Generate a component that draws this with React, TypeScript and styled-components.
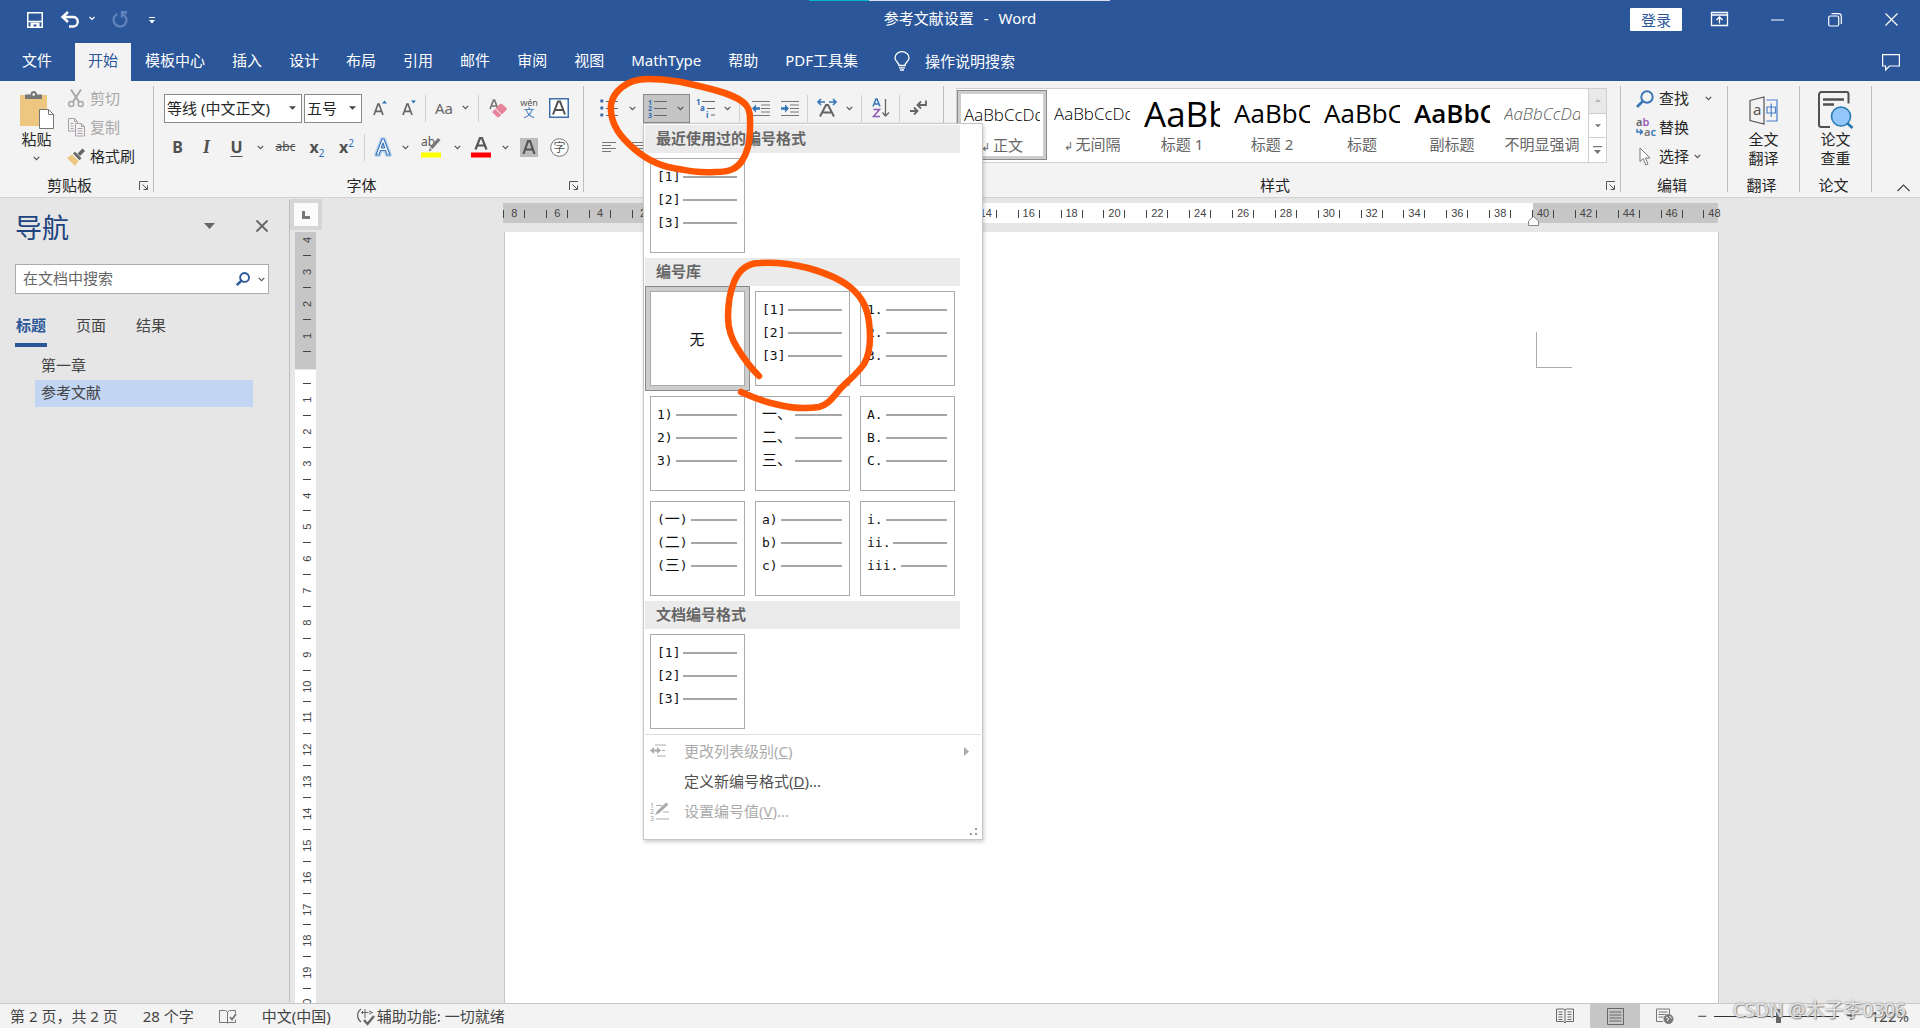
import React from 'react';
import styled, { createGlobalStyle, css } from 'styled-components';

const BLUE = '#2b579a';
const INK = '#444444';
const LINE = '#c6c6c6';

const Global = createGlobalStyle`
  * { box-sizing: border-box; }
  body {
    margin: 0;
    overflow: hidden;
    color: #262626;
    font: 15px/20px "Noto Sans", "Noto Sans CJK SC", sans-serif;
  }
  button, input, select { font: inherit; color: inherit; }
  button { border: 0; padding: 0; background: none; }
  svg { display: block; flex: none; overflow: visible; }
`;

const Window = styled.div`
  position: relative;
  display: flex;
  flex-direction: column;
  height: 100vh;
  background: #e6e6e6;
`;

/* ---------- title bar ---------- */

const TitleBar = styled.header`
  display: grid;
  grid-template-columns: 1fr auto 1fr;
  height: 43px;
  background: ${BLUE};
  color: #fff;
`;

const LoadStrip = styled.div`
  position: absolute;
  top: 0;
  left: 809px;
  width: 301px;
  height: 1px;
  background: linear-gradient(to right, #00b7c3 60px, #d9e0ea 60px);
`;

const QuickAccess = styled.div`
  display: flex;
  align-items: center;
  gap: 16px;
  height: 40px;
  padding-left: 27px;
`;

const DocTitle = styled.h1`
  display: flex;
  gap: 10px;
  margin: 0;
  font-size: 15px;
  font-weight: 400;
  line-height: 36px;
`;

const WindowControls = styled.div`
  display: flex;
  justify-content: flex-end;
  align-items: center;
  height: 39px;
`;

const LoginButton = styled.button`
  width: 52px;
  height: 23px;
  margin-right: 7px;
  border-radius: 1px;
  background: #fff;
  color: ${BLUE};
  line-height: 22px;
`;

const WindowButton = styled.button`
  display: grid;
  place-items: center;
  width: 57px;
  height: 36px;
`;

/* ---------- tab strip ---------- */

const TabStrip = styled.nav`
  display: flex;
  gap: 1px;
  height: 38px;
  padding-left: 9px;
  background: ${BLUE};
  color: #fff;
`;

const Tab = styled.button<{ $active?: boolean; $first?: boolean }>`
  padding: 0 13px 4px;
  margin-right: ${p => (p.$first ? '9px' : '0')};
  line-height: 32px;
  ${p => p.$active && css`background: #f3f3f3; color: ${BLUE};`}
`;

const TellMe = styled.button`
  display: flex;
  align-items: center;
  gap: 15px;
  margin-left: 22px;
  padding-bottom: 2px;
`;

const CommentButton = styled.button`
  margin-left: auto;
  margin-right: 20px;
`;

/* ---------- ribbon ---------- */

const Ribbon = styled.section`
  display: flex;
  height: 117px;
  padding: 5px 0;
  background: #f3f3f3;
  border-bottom: 1px solid #d2d2d2;
`;

const Group = styled.div<{ $w?: number }>`
  display: flex;
  flex-direction: column;
  ${p => (p.$w ? `flex: none; width: ${p.$w}px;` : 'flex: 1; min-width: 0;')}
  border-right: 1px solid #bdbdbd;
`;

const GroupBody = styled.div`
  flex: 1;
  min-height: 0;
`;

const GroupFooter = styled.div`
  display: flex;
  align-items: center;
  height: 12px;
  padding-right: 4px;
  line-height: 12px;
`;

const GroupLabel = styled.span`
  flex: 1;
  padding-bottom: 2px;
  text-align: center;
`;

const Launcher = styled.button`
  flex: none;
`;

const ClipboardBody = styled(GroupBody)`
  display: flex;
`;

const BigButton = styled.button`
  display: flex;
  flex-direction: column;
  align-items: center;
  justify-content: flex-start;
  padding-top: 4px;
  line-height: 19px;
`;

const PasteButton = styled(BigButton)`
  width: 62px;
  padding-left: 11px;
`;

const BigIcon = styled.span`
  display: grid;
  place-items: center;
  height: 40px;
`;

const ChevronSlot = styled.span`
  display: grid;
  place-items: center;
  height: 18px;
`;

const LineList = styled.div<{ $pad: number }>`
  display: flex;
  flex-direction: column;
  gap: 2px;
  padding-left: ${p => p.$pad}px;
`;

const LineButton = styled.button<{ $off?: boolean }>`
  display: flex;
  align-items: center;
  gap: 5px;
  height: 27px;
  padding-bottom: 2px;
  line-height: 25px;
  color: ${p => (p.$off ? '#a8a8a8' : '#262626')};
`;

const LineIcon = styled.span`
  display: grid;
  place-items: center;
  width: 18px;
  height: 20px;
`;

const ToolRows = styled(GroupBody)`
  display: flex;
  flex-direction: column;
  gap: 10px;
  padding: 8px 0 0 10px;
`;

const ToolRow = styled.div`
  display: flex;
  align-items: center;
  height: 29px;
`;

const Tool = styled.button<{ $w?: number }>`
  display: grid;
  place-items: center;
  flex: none;
  width: ${p => p.$w ?? 29}px;
  height: 28px;
  padding-bottom: 1px;
  color: ${INK};
`;

const AaTool = styled.button`
  display: flex;
  align-items: center;
  gap: 9px;
  width: 46px;
  height: 28px;
  padding: 0 0 2px 6px;
  color: #666;
`;

const Divider = styled.span<{ $gap?: number }>`
  flex: none;
  width: 1px;
  height: 27px;
  margin: 0 ${p => p.$gap ?? 3}px;
  background: #d0d0d0;
`;

const Combo = styled.label<{ $w: number }>`
  display: flex;
  align-items: center;
  width: ${p => p.$w}px;
  height: 29px;
  padding: 0 5px 2px 0;
  margin-right: 2px;
  border: 1px solid #8a8a8a;
  background: #fff;
  color: ${INK};
  select {
    flex: 1;
    min-width: 0;
    padding: 0 0 0 2px;
    border: 0;
    outline: 0;
    appearance: none;
    background: none;
    color: #262626;
  }
`;

const Glyph = styled.span<{ $size?: number; $bold?: boolean; $italic?: boolean; $line?: string; $serif?: boolean }>`
  font-size: ${p => p.$size ?? 18}px;
  font-weight: ${p => (p.$bold ? 700 : 400)};
  font-style: ${p => (p.$italic ? 'italic' : 'normal')};
  text-decoration: ${p => p.$line ?? 'none'};
  text-underline-offset: 3px;
  line-height: 20px;
  color: #505050;
  ${p => p.$serif && 'font-family: "Liberation Serif", serif;'}
  sub, sup { font-size: 10px; line-height: 0; font-weight: 400; color: #2f6eb5; }
`;

const MenuAnchor = styled.div`
  position: relative;
  margin-left: 2px;
`;

const NumberingButton = styled.button`
  display: flex;
  align-items: center;
  gap: 10px;
  width: 47px;
  height: 29px;
  padding-left: 4px;
  border: 1px solid #8a8a8a;
  background: #c5c5c5;
`;

/* ---------- styles gallery ---------- */

const GalleryBody = styled(GroupBody)`
  padding: 2px 13px 0 12px;
`;

const Gallery = styled.div`
  display: flex;
  height: 75px;
  border: 1px solid #cfcfcf;
  background: #fff;
`;

const StyleCards = styled.div`
  display: flex;
  flex: 1;
  min-width: 0;
  overflow: hidden;
  padding-top: 1px;
`;

const StyleCard = styled.button<{ $on?: boolean }>`
  flex: none;
  display: flex;
  flex-direction: column;
  width: 90px;
  height: 70px;
  padding: 0 7px;
  ${p => p.$on && css`
    padding: 0 6px;
    border: 1px solid #8a8a8a;
    box-shadow: inset 0 0 0 3px #cdcdcd;
  `}
`;

const StyleSample = styled.span<{ $size: number; $weight?: number; $italic?: boolean }>`
  align-self: stretch;
  height: 46px;
  overflow: hidden;
  text-align: left;
  white-space: nowrap;
  font-family: "Open Sans", "Noto Sans", sans-serif;
  font-size: ${p => p.$size}px;
  font-weight: ${p => p.$weight ?? 400};
  font-style: ${p => (p.$italic ? 'italic' : 'normal')};
  line-height: 47px;
  color: ${p => (p.$italic ? '#5a5a5a' : '#000')};
`;

const StyleName = styled.span`
  align-self: stretch;
  line-height: 16px;
  text-align: center;
  white-space: nowrap;
  color: #666;
  small { font-size: 11px; }
`;

const GalleryScroll = styled.div`
  display: flex;
  flex-direction: column;
  width: 18px;
  border-left: 1px solid #cfcfcf;
  button {
    flex: 1;
    display: grid;
    place-items: center;
    color: #777;
  }
  button + button { border-top: 1px solid #cfcfcf; }
  button:first-child { background: #e9e9e9; color: #b5b5b5; }
`;

const CollapseButton = styled.button`
  align-self: flex-end;
  flex: none;
  margin: 0 10px 0 25px;
`;

/* ---------- numbering menu ---------- */

const Menu = styled.div`
  position: absolute;
  z-index: 5;
  top: 100%;
  left: 0;
  width: 340px;
  padding: 1px 1px 13px;
  border: 1px solid ${LINE};
  background: #fff;
  box-shadow: 1px 2px 4px rgba(0, 0, 0, 0.2);
`;

const MenuHeading = styled.h2`
  width: 315px;
  height: 28px;
  margin: 0;
  padding-left: 11px;
  background: #ebebeb;
  color: #666;
  font-size: 15px;
  font-weight: 700;
  line-height: 26px;
`;

const TileGrid = styled.div`
  display: grid;
  grid-template-columns: repeat(3, 105px);
`;

const TileSlot = styled.button<{ $on?: boolean }>`
  height: 105px;
  padding: ${p => (p.$on ? 4 : 5)}px;
  ${p => p.$on && 'border: 1px solid #8a8a8a; background: #cdcdcd;'}
`;

const Tile = styled.span`
  display: flex;
  flex-direction: column;
  height: 95px;
  padding: 6px 7px 0 6px;
  border: 1px solid #ababab;
  background: #fff;
  color: #111;
`;

const NoneLabel = styled.span`
  margin: auto;
  padding-bottom: 6px;
`;

const TileRow = styled.span`
  display: flex;
  align-items: center;
  gap: 3px;
  height: 23px;
  font: 13px/23px "DejaVu Sans Mono", "Noto Sans CJK SC", monospace;
  &::after {
    content: '';
    flex: 1;
    height: 2px;
    background: #a6a6a6;
  }
`;

const Han = styled.span`
  font-size: 15px;
`;

const MenuItems = styled.div`
  border-top: 1px solid #dfdfe3;
  padding-top: 1px;
`;

const MenuItem = styled.button<{ $off?: boolean }>`
  display: flex;
  align-items: center;
  width: 100%;
  height: 30px;
  padding: 0 12px 0 5px;
  color: ${p => (p.$off ? '#ababab' : '#505050')};
  text-align: left;
`;

const MenuIcon = styled.span`
  width: 34px;
`;

const MenuText = styled.span`
  flex: 1;
`;

const Grip = styled.span`
  position: absolute;
  right: 4px;
  bottom: 3px;
`;

/* ---------- navigation pane ---------- */

const Workspace = styled.main`
  display: flex;
  flex: 1;
  min-height: 0;
`;

const NavPane = styled.aside`
  flex: none;
  width: 290px;
  margin: 2px 0 1px;
  padding: 9px 20px 0 15px;
  border-right: 1px solid #bdbdbd;
`;

const NavHeader = styled.div`
  display: flex;
  align-items: center;
  height: 34px;
  gap: 40px;
`;

const NavTitle = styled.h2`
  flex: 1;
  margin: 0;
  padding-top: 4px;
  color: #1e4480;
  font-size: 27px;
  font-weight: 400;
  line-height: 34px;
`;

const SearchBox = styled.label`
  display: flex;
  align-items: center;
  gap: 8px;
  height: 30px;
  margin-top: 21px;
  padding: 0 3px 0 7px;
  border: 1px solid #ababab;
  background: #fff;
  input {
    flex: 1;
    min-width: 0;
    padding: 0 0 3px;
    border: 0;
    outline: 0;
    background: none;
  }
  input::placeholder { color: #666; opacity: 1; }
`;

const NavTabs = styled.div`
  display: flex;
  margin-top: 18px;
`;

const NavTab = styled.button<{ $on?: boolean }>`
  width: 32px;
  height: 35px;
  margin-right: 28px;
  padding-bottom: 5px;
  color: ${p => (p.$on ? BLUE : INK)};
  font-weight: ${p => (p.$on ? 700 : 400)};
  white-space: nowrap;
  border-bottom: 4px solid ${p => (p.$on ? BLUE : 'transparent')};
`;

const Outline = styled.ul`
  margin: 6px 16px 0 20px;
  padding: 0;
  list-style: none;
`;

const OutlineItem = styled.li<{ $on?: boolean }>`
  height: 27px;
  padding-left: 6px;
  color: ${INK};
  line-height: 25px;
  background: ${p => (p.$on ? '#c2d5f2' : 'transparent')};
`;

/* ---------- editor ---------- */

const Editor = styled.section`
  flex: 1;
  min-width: 0;
  display: grid;
  grid-template: 34px minmax(0, 1fr) / 33px minmax(0, 1fr);
`;

const TabStop = styled.button`
  display: grid;
  place-items: center;
  width: 32px;
  height: 31px;
  margin-top: 1px;
  border: 4px solid #d6d6d6;
  background: #fbfbfb;
`;

const RulerTrack = styled.div`
  padding: 5px 202px 0 180px;
`;

const Ruler = styled.div`
  position: relative;
  height: 20px;
  background: linear-gradient(to right, ${LINE} 183px, #fff 183px calc(100% - 185px), ${LINE} calc(100% - 185px));
`;

const RulerClip = styled.div`
  display: flex;
  margin-left: -10px;
  margin-right: -18px;
  clip-path: inset(0 14px 0 10px);
`;

const RulerCell = styled.span`
  flex: 1;
  display: flex;
  align-items: center;
  justify-content: center;
  height: 20px;
  font: 11px/24px "Liberation Sans", sans-serif;
  color: ${INK};
  span { width: 20px; text-align: center; }
  &::before, &::after {
    content: '';
    width: 1px;
    height: 8px;
    margin-top: 2px;
    background: ${INK};
  }
`;

const IndentMark = styled.span`
  position: absolute;
  right: 179px;
  top: 13px;
`;

const VRuler = styled.div`
  display: flex;
  flex-direction: column;
  width: 21px;
  margin-left: 5px;
  overflow: hidden;
`;

const VMargin = styled.div`
  flex: none;
  display: flex;
  flex-direction: column;
  justify-content: flex-end;
  height: 137px;
  padding-bottom: 17px;
  overflow: hidden;
  background: ${LINE};
`;

const VBody = styled.div`
  flex: 1;
  display: flex;
  flex-direction: column;
  margin: 1px 0 -17px;
  padding-top: 13px;
  background: #fff;
`;

const VCell = styled.span<{ $tickLast?: boolean }>`
  flex: ${p => (p.$tickLast ? 'none' : 1)};
  display: flex;
  flex-direction: ${p => (p.$tickLast ? 'column-reverse' : 'column')};
  align-items: center;
  height: 32px;
  min-height: 0;
  padding-left: 3px;
  &::before {
    content: '';
    flex: none;
    width: 8px;
    height: 1px;
    background: ${INK};
  }
  span {
    flex: 1;
    writing-mode: vertical-rl;
    transform: rotate(180deg);
    text-align: center;
    font: 11px/12px "Liberation Sans", sans-serif;
    color: ${INK};
  }
`;

const Canvas = styled.div`
  display: flex;
  padding: 0 201px 0 181px;
`;

const Page = styled.article`
  flex: 1;
  border: solid ${LINE};
  border-width: 0 1px;
  background: #fff;
`;

const MarginCorner = styled.span`
  display: block;
  width: 36px;
  height: 36px;
  margin: 100px 146px 0 auto;
  border: solid #ababab;
  border-width: 0 0 1px 1px;
`;

/* ---------- status bar ---------- */

const StatusBar = styled.footer`
  position: relative;
  display: flex;
  align-items: center;
  height: 25px;
  padding: 0 11px 0 10px;
  border-top: 1px solid ${LINE};
  background: #f3f3f3;
  color: ${INK};
  line-height: 24px;
  white-space: pre;
`;

const StatusItems = styled.div`
  display: flex;
  align-items: center;
  gap: 25px;
  flex: 1;
`;

const StatusNote = styled.span`
  display: flex;
  align-items: center;
  gap: 2px;
`;

const ViewButton = styled.button<{ $on?: boolean }>`
  display: grid;
  place-items: center;
  width: 50px;
  height: 24px;
  background: ${p => (p.$on ? LINE : 'transparent')};
`;

const ZoomButton = styled.button`
  width: 24px;
  font-size: 17px;
  line-height: 22px;
`;

const ZoomSlider = styled.input`
  appearance: none;
  width: 125px;
  height: 16px;
  margin: 0;
  background: linear-gradient(#333, #333) center / 100% 1px no-repeat;
  &::-webkit-slider-thumb {
    appearance: none;
    width: 5px;
    height: 14px;
    background: #666;
  }
`;

const ZoomValue = styled.span`
  width: 46px;
  text-align: right;
`;

const Watermark = styled.span`
  position: absolute;
  right: 14px;
  bottom: 6px;
  font-size: 19px;
  line-height: 24px;
  color: rgba(255, 255, 255, 0.75);
  text-shadow: 0 0 2px #777, 1px 1px 1px #999;
`;

const Annotations = styled.svg`
  position: absolute;
  z-index: 9;
  top: 0;
  left: 0;
  pointer-events: none;
`;

/* ---------- small drawings ---------- */

const Chevron = ({ color = '#555' }: { color?: string }) => (
  <svg width="7" height="5" viewBox="0 0 7 5" fill="none" stroke={color} strokeWidth="1.2"><path d="M0.7 0.8 3.5 3.6 6.3 0.8" /></svg>
);

const Down = ({ w = 7 }: { w?: number }) => (
  <svg width={w} height={w / 2 + 0.5} viewBox="0 0 8 4" fill="currentColor"><path d="M0 0h8L4 4z" /></svg>
);

const LaunchIcon = () => (
  <svg width="10" height="10" viewBox="0 0 10 10" fill="none" stroke="#555"><path d="M0.5 9V0.5H9M3.5 3.5 8 8M4.5 8.5h4v-4" /></svg>
);

const Drop = ({ w, label }: { w: number; label: string }) => (
  <Tool $w={w} aria-label={label}><Chevron /></Tool>
);

const SearchIcon = ({ size, width = 2, color }: { size: number; width?: number; color: string }) => (
  <svg width={size} height={size} viewBox="0 0 18 18" fill="none" stroke={color} strokeWidth={width}><circle cx="11" cy="7" r="5.7" /><path d="M6.7 11.3 1 17" strokeWidth={width + 0.8} /></svg>
);

const SaveIcon = () => (
  <svg width="16" height="16" viewBox="0 0 16 16" fill="none"><path d="M0.750.750h14.500v14.500H0.750z" stroke="#fff" strokeWidth="1.500" /><path d="M1 9.500h14" stroke="#fff" strokeWidth="1.500" /><path d="M3.500 15.500V10.500h9v5H9.500v-3H6.500v3z" fill="#fff" /></svg>
);

const PasteIcon = () => (
  <svg width="34" height="38" viewBox="0 0 34 38">
    <path d="M0 4h27v31H0z" fill="#edc77f" />
    <path d="M5 8V3.5h5.5C10.500 1 12 0 13.700 0s3.300 1 3.300 3.500H22V8z" fill="#777" /><circle cx="13.700" cy="3.500" r="1.300" fill="#fff" />
    <path d="M19.500 18.500h9l5 5v14h-14z" fill="#fff" stroke="#777" /><path d="M28.500 18.500v5h5" fill="none" stroke="#777" />
  </svg>
);

const CutIcon = () => (
  <svg width="16" height="19" viewBox="0 0 16 19" fill="none" stroke="#a8a8a8" strokeWidth="1.500"><circle cx="3.300" cy="15" r="2.500" /><circle cx="12.700" cy="15" r="2.500" /><path d="M3 0.500 11 12.700M13 0.500 5 12.700" strokeWidth="2" /></svg>
);

const CopyIcon = () => (
  <svg width="17" height="19" viewBox="0 0 17 19" fill="#f3f3f3" stroke="#a8a0a8"><path d="M0.500 0.500h6l3 3v9.500h-9zM6.500 0.500v3h3M2.500 5.500h3M2.500 8h3M2.500 10.500h3" /><path d="M7.500 5.500h6l3 3v9.500h-9zM13.500 5.500v3h3M9.500 10.500h5M9.500 13h5M9.500 15.500h5" /></svg>
);

const BrushIcon = () => (
  <svg width="18" height="18" viewBox="0 0 18 18"><path d="M0 10 5 6.500 11.500 13 8 18z" fill="#edc77f" /><path d="M6 5.500 8 3.800l6.500 6.500-2 2z" fill="#666" /><path d="m10.500 5.500 5-5L18 3l-5 5z" fill="#666" /></svg>
);

const LetterIcon = ({ up }: { up: boolean }) => (
  <svg width="14" height="18" viewBox="0 0 14 18" fill="none">
    <path d="M1 16 5 5h1l4 11M2.500 12.300h6" stroke="#666" strokeWidth="1.700" />
    <path d={up ? 'M9 4.500h5L11.500 1.500z' : 'M9 1.500h5l-2.500 3z'} fill="#2f6eb5" />
  </svg>
);

const EraserIcon = () => (
  <svg width="18" height="20" viewBox="0 0 18 20" fill="none">
    <path d="M1 11 4.500 2h1L9 11M2.500 8h5" stroke="#777" strokeWidth="1.700" />
    <path d="m3 14 8-8a2 2 0 0 1 2 0l4.500 4a2 2 0 0 1 0 2L10 19a2 2 0 0 1-2 0z" fill="#e8849a" /><path d="m6 10.500 6.500 6" stroke="#fff" />
  </svg>
);

const PinyinIcon = () => (
  <svg width="18" height="22" viewBox="0 0 18 22">
    <text x="9" y="9" fontSize="9" textAnchor="middle" fill="#555" fontFamily="Noto Sans, sans-serif">wén</text>
    <text x="9" y="20" fontSize="11" textAnchor="middle" fill="#2f6eb5" fontFamily="Noto Sans CJK SC, sans-serif">文</text>
  </svg>
);

const BoxedA = () => (
  <svg width="20" height="20" viewBox="0 0 20 20"><path d="M0.750.750h18.500v18.500h-18.500z" fill="#fff" stroke="#3d6fad" strokeWidth="1.500" /><path d="M4 16.500 9 3.500h2l5 13M6 12h8" fill="none" stroke="#505050" strokeWidth="2" /></svg>
);

const GlowA = () => (
  <svg width="20" height="22" viewBox="0 0 20 22" fill="none" strokeLinejoin="round"><path d="M3 19 9 3h2l6 16h-3l-1.500-4.500h-5L6 19zM8.300 12h3.400L10 7z" stroke="#bcd6f2" strokeWidth="4" /><path d="M3 19 9 3h2l6 16h-3l-1.500-4.500h-5L6 19zM8.300 12h3.400L10 7z" fill="#fff" stroke="#3d78bd" strokeWidth="1.200" /></svg>
);

const HighlightIcon = () => (
  <svg width="20" height="22" viewBox="0 0 20 22">
    <text x="0" y="10" fontSize="12" fill="#555" fontFamily="Noto Sans, sans-serif">ab</text>
    <path d="m9 11 8-9 2.500 2-8 9zM8.500 12l2.500 2-3 1.500z" fill="#777" /><path d="M0 16.500h20v5H0z" fill="#ff0" />
  </svg>
);

const FontColorIcon = () => (
  <svg width="20" height="22" viewBox="0 0 20 22"><path d="M4.500 13.500 9 2h2l4.500 11.500M6.500 9.500h7" fill="none" stroke="#555" strokeWidth="2.200" /><path d="M0 16.500h20v5H0z" fill="#f00" /></svg>
);

const ShadedA = () => (
  <svg width="18" height="19" viewBox="0 0 18 19"><path d="M0 0h18v19H0z" fill="#bcbcbc" /><path d="M3.500 16 8 3h2l4.500 13M5.500 11.500h7" fill="none" stroke="#555" strokeWidth="2.200" /></svg>
);

const CircledChar = () => (
  <svg width="19" height="19" viewBox="0 0 19 19"><circle cx="9.500" cy="9.500" r="8.800" fill="#fff" stroke="#777" /><text x="9.500" y="14" fontSize="12" textAnchor="middle" fill="#555" fontFamily="Noto Sans CJK SC, sans-serif">字</text></svg>
);

const BulletsIcon = () => (
  <svg width="18" height="18" viewBox="0 0 18 18"><g fill="#3d6fad"><circle cx="1.800" cy="2" r="1.700" /><circle cx="1.800" cy="9" r="1.700" /><circle cx="1.800" cy="16" r="1.700" /></g><path d="M6 2.500h12M6 9.500h12M6 16.500h12" stroke="#666" /></svg>
);

const NumbersIcon = () => (
  <svg width="19" height="19" viewBox="0 0 19 19"><g fill="#2f6eb5" fontSize="7" fontWeight="700" fontFamily="Noto Sans, sans-serif"><text x="0" y="5.500">1</text><text x="0" y="12">2</text><text x="0" y="19">3</text></g><path d="M6 2.500h13M6 9.500h13M6 16.500h13" stroke="#666" /></svg>
);

const MultiIcon = () => (
  <svg width="19" height="19" viewBox="0 0 19 19"><g fill="#2f6eb5" fontSize="8" fontWeight="700" fontFamily="Noto Sans, sans-serif"><text x="0" y="6">1</text><text x="4" y="12">a</text><text x="10" y="18.500">i</text></g><path d="M6 2.500h13M11 9.500h8M15 16h4" stroke="#666" /></svg>
);

const IndentIcon = ({ right }: { right?: boolean }) => (
  <svg width="18" height="17" viewBox="0 0 18 17"><path d="M0 1.500h18M9 5h9M9 8.500h9M9 12h9M0 15.500h18" stroke="#777" /><path d={right ? 'M0 7.200h4V4.500l4 4-4 4V9.700H0z' : 'M8 7.200H4V4.500l-4 4 4 4V9.700h4z'} fill="#3475b5" /></svg>
);

const SpreadIcon = () => (
  <svg width="20" height="18" viewBox="0 0 20 18" fill="none"><path d="M3 17.500 9 6h2l6 11.500M5.500 13.500h9" stroke="#666" strokeWidth="2" /><path d="M8 3H1M4 0 1 3l3 3M12 3h7M16 0l3 3-3 3" stroke="#3475b5" strokeWidth="1.600" /></svg>
);

const SortIcon = () => (
  <svg width="18" height="20" viewBox="0 0 18 20" fill="none"><path d="M1 8.500 4 1h1l3 7.500M2 6h5" stroke="#3475b5" strokeWidth="1.500" /><path d="M1.500 11.500h6l-6 7h6.500" stroke="#8a5bb0" strokeWidth="1.500" /><path d="M13.500 1v17M10.500 14.500l3 3.500 3.500-3.500" stroke="#666" strokeWidth="1.300" /></svg>
);

const MarksIcon = () => (
  <svg width="17" height="16" viewBox="0 0 17 16" fill="none" stroke="#666" strokeWidth="1.800"><path d="M16 0.500V5H8M11 1.500 7.500 5l3.500 3.500M0 11h7M4 7.500 7.500 11 4 14.500" /></svg>
);

const AlignIcon = ({ center }: { center?: boolean }) => (
  <svg width="14" height="13" viewBox="0 0 14 13" stroke="#777"><path d={center ? 'M0 1.500h14M2 4.500h10M0 7.500h14M2 10.500h10' : 'M0 1.500h14M0 4.500h9M0 7.500h14M0 10.500h9'} /></svg>
);

const ReplaceIcon = () => (
  <svg width="20" height="20" viewBox="0 0 20 20"><g fontSize="11" fontWeight="600" fontFamily="Noto Sans, sans-serif"><text x="0" y="8" fill="#666">a<tspan fill="#9a5bb8">b</tspan></text><text x="8" y="18" fill="#777">a<tspan fill="#3475b5">c</tspan></text></g><path d="M1 11v3h5M4 11.500l2.500 2.500L4 16.500" fill="none" stroke="#3475b5" strokeWidth="1.400" /></svg>
);

const PointerIcon = () => (
  <svg width="12" height="19" viewBox="0 0 12 19" fill="#fff" stroke="#777"><path d="M1 1v13.500l3.200-3 2.500 6.500 2.300-1-2.600-6H11z" /></svg>
);

const TranslateIcon = () => (
  <svg width="29" height="29" viewBox="0 0 29 29" fill="none"><path d="M1 4.500 15 1v27L1 24.500z" stroke="#555" strokeWidth="1.200" /><text x="4" y="19" fontSize="15" fill="#555" fontFamily="Noto Sans, sans-serif">a</text><path d="M17.500 4H28v21H17.500M18 11h8.500v6H18zM22.200 7.500V21" stroke="#4a80c8" strokeWidth="1.200" /></svg>
);

const PaperCheckIcon = () => (
  <svg width="35" height="38" viewBox="0 0 35 38" fill="none"><path d="M12 36H3.500a2.500 2.500 0 0 1-2.500-2.500V3.500A2.500 2.500 0 0 1 3.500 1h25A2 2 0 0 1 30.500 3v9.500" stroke="#505050" strokeWidth="2" /><path d="M5 8.500h21M5 13.500h11" stroke="#505050" strokeWidth="2.500" /><circle cx="23" cy="25.500" r="9.500" fill="#93c6fb" stroke="#2b7ab0" strokeWidth="1.600" /><path d="m29 32 5.500 5" stroke="#2b7ab0" strokeWidth="2.800" /></svg>
);

/* ---------- content ---------- */

const tabs = ['文件', '开始', '模板中心', '插入', '设计', '布局', '引用', '邮件', '审阅', '视图', 'MathType', '帮助', 'PDF工具集'];

const styleCards = [
  { name: '正文', para: true, sample: 'AaBbCcDd', size: 17, weight: 300, on: true },
  { name: '无间隔', para: true, sample: 'AaBbCcDd', size: 17, weight: 300 },
  { name: '标题 1', sample: 'AaBb', size: 35, weight: 500 },
  { name: '标题 2', sample: 'AaBbC', size: 26, weight: 400 },
  { name: '标题', sample: 'AaBbC', size: 26, weight: 400 },
  { name: '副标题', sample: 'AaBbC', size: 26, weight: 600 },
  { name: '不明显强调', sample: 'AaBbCcDd', size: 17, weight: 300, italic: true },
];

const bracket = ['[1]', '[2]', '[3]'];
const library = [
  null,
  bracket,
  ['1.', '2.', '3.'],
  ['1)', '2)', '3)'],
  ['一、', '二、', '三、'],
  ['A.', 'B.', 'C.'],
  ['(一)', '(二)', '(三)'],
  ['a)', 'b)', 'c)'],
  ['i.', 'ii.', 'iii.'],
];

const NumberTile = ({ rows }: { rows: string[] | null }) => (
  <TileSlot $on={!rows}>
    <Tile>
      {rows
        ? rows.map(r => (
            <TileRow key={r}>
              <span>{[...r].map((c, i) => (/[一二三、]/.test(c) ? <Han key={i}>{c}</Han> : c))}</span>
            </TileRow>
          ))
        : <NoneLabel>无</NoneLabel>}
    </Tile>
  </TileSlot>
);

const NumberingMenu = () => (
  <Menu>
    <MenuHeading>最近使用过的编号格式</MenuHeading>
    <TileGrid><NumberTile rows={bracket} /></TileGrid>
    <MenuHeading>编号库</MenuHeading>
    <TileGrid>{library.map((rows, i) => <NumberTile key={i} rows={rows} />)}</TileGrid>
    <MenuHeading>文档编号格式</MenuHeading>
    <TileGrid><NumberTile rows={bracket} /></TileGrid>
    <MenuItems>
      <MenuItem $off>
        <MenuIcon><svg width="16" height="14" viewBox="0 0 16 14"><path d="M5 1h11M12 6.500h3M7 12h9" stroke="#ababab" /><path d="M0 6.500 4 3v2.500h3V3l4 3.500-4 3.500V7.500H4V10z" fill="#ababab" /></svg></MenuIcon>
        <MenuText>更改列表级别(<u>C</u>)</MenuText>
        <svg width="5" height="9" viewBox="0 0 5 9"><path d="M0 0v9l5-4.500z" fill="#ababab" /></svg>
      </MenuItem>
      <MenuItem>
        <MenuIcon />
        <MenuText>定义新编号格式(<u>D</u>)...</MenuText>
      </MenuItem>
      <MenuItem $off>
        <MenuIcon><svg width="19" height="19" viewBox="0 0 19 19"><g fill="#999" fontSize="7" fontFamily="Noto Sans, sans-serif"><text x="0" y="5.500">1</text><text x="0" y="12">2</text><text x="0" y="19">3</text></g><path d="M6 3.500h6M13 10h6M6 17h13" stroke="#ababab" /><path d="m5 13 2-4 9-8.500 2.500 2L9.500 11z" fill="#ababab" /></svg></MenuIcon>
        <MenuText>设置编号值(<u>V</u>)...</MenuText>
      </MenuItem>
    </MenuItems>
    <Grip><svg width="8" height="8" viewBox="0 0 8 8" fill="#999"><path d="M5 0h2v2H5zM5 5h2v2H5zM0 5h2v2H0z" /></svg></Grip>
  </Menu>
);

const Footer = ({ label, launch }: { label: string; launch?: boolean }) => (
  <GroupFooter>
    <GroupLabel>{label}</GroupLabel>
    {launch && <Launcher aria-label={label + '设置'}><LaunchIcon /></Launcher>}
  </GroupFooter>
);

export default function App() {
  const marks = Array.from({ length: 29 }, (_, i) => Math.abs(i * 2 - 8));
  return (
    <Window>
      <Global />
      <TitleBar>
        <LoadStrip />
        <QuickAccess>
          <Tool $w={16} aria-label="保存"><SaveIcon /></Tool>
          <Tool $w={36} aria-label="撤消"><svg width="36" height="17" viewBox="0 0 36 17" fill="none"><path d="M9 1 3.500 6 9 11M4 6h9.500a4.500 4.500 0 0 1 1 9.500H10" stroke="#fff" strokeWidth="2.400" /><path d="m30.500 6 2.500 2.500L35.500 6" stroke="#fff" strokeWidth="1.200" /></svg></Tool>
          <Tool $w={18} aria-label="恢复"><svg width="16" height="17" viewBox="0 0 16 17" fill="none" stroke="#5f82b8" strokeWidth="2.400"><path d="M5.500 3A6.500 6.500 0 1 0 11 3.200M15 1.200h-5v5.500" /></svg></Tool>
          <Tool $w={14} aria-label="自定义"><svg width="6" height="8" viewBox="0 0 6 8" fill="#fff"><path d="M0 1h6v1H0zM0 4h6L3 7.500z" /></svg></Tool>
        </QuickAccess>
        <DocTitle><span>参考文献设置</span><span>-</span><span>Word</span></DocTitle>
        <WindowControls>
          <LoginButton>登录</LoginButton>
          <Tool $w={60} aria-label="功能区显示选项"><svg width="17" height="14" viewBox="0 0 17 14" fill="none" stroke="#fff"><path d="M0.500.500h16v13H0.500zM0.500 3h16M8.500 11.500V5M5.500 8l3-3 3 3" strokeWidth="1.300" /></svg></Tool>
          <WindowButton aria-label="最小化"><svg width="13" height="2" viewBox="0 0 13 2"><path d="M0 1h13" stroke="#fff" /></svg></WindowButton>
          <WindowButton aria-label="还原"><svg width="14" height="14" viewBox="0 0 14 14" fill="none" stroke="#fff" strokeWidth="1.200"><rect x="0.700" y="3" width="10" height="10" rx="1.500" /><path d="M3.500.700h7a2.800 2.800 0 0 1 2.800 2.800V11" /></svg></WindowButton>
          <WindowButton aria-label="关闭"><svg width="13" height="13" viewBox="0 0 13 13"><path d="m0.500.500 12 12M12.500.500l-12 12" stroke="#fff" strokeWidth="1.200" /></svg></WindowButton>
        </WindowControls>
      </TitleBar>

      <TabStrip>
        {tabs.map((t, i) => <Tab key={t} $first={i === 0} $active={i === 1}>{t}</Tab>)}
        <TellMe>
          <svg width="16" height="20" viewBox="0 0 16 20" fill="none" stroke="#fff" strokeWidth="1.300"><path d="M5 14.500C5 11.500 1 10.500 1 7a7 6.400 0 0 1 14 0c0 3.500-4 4.500-4 7.500zM5 16.800h6M6 19h4" /></svg>
          操作说明搜索
        </TellMe>
        <CommentButton aria-label="批注"><svg width="18" height="17" viewBox="0 0 18 17" fill="none" stroke="#fff" strokeWidth="1.200"><path d="M0.600.600h16.800v11.400H7.500L3.600 16v-4h-3z" /></svg></CommentButton>
      </TabStrip>

      <Ribbon>
        <Group $w={154}>
          <ClipboardBody>
            <PasteButton><BigIcon><PasteIcon /></BigIcon>粘贴<ChevronSlot><Chevron /></ChevronSlot></PasteButton>
            <LineList $pad={5}>
              <LineButton $off><LineIcon><CutIcon /></LineIcon>剪切</LineButton>
              <LineButton $off><LineIcon><CopyIcon /></LineIcon>复制</LineButton>
              <LineButton><LineIcon><BrushIcon /></LineIcon>格式刷</LineButton>
            </LineList>
          </ClipboardBody>
          <Footer label="剪贴板" launch />
        </Group>

        <Group $w={430}>
          <ToolRows>
            <ToolRow>
              <Combo $w={138}><select aria-label="字体"><option>等线 (中文正文)</option></select><Down /></Combo>
              <Combo $w={58}><select aria-label="字号"><option>五号</option></select><Down /></Combo>
              <Tool $w={31} aria-label="增大字号"><LetterIcon up /></Tool>
              <Tool $w={27} aria-label="减小字号"><LetterIcon up={false} /></Tool>
              <Divider />
              <AaTool>Aa<Chevron /></AaTool>
              <Divider />
              <Tool $w={32} aria-label="清除格式"><EraserIcon /></Tool>
              <Tool aria-label="拼音指南"><PinyinIcon /></Tool>
              <Tool $w={31} aria-label="字符边框"><BoxedA /></Tool>
            </ToolRow>
            <ToolRow>
              <Tool $w={27}><Glyph $bold $size={16}>B</Glyph></Tool>
              <Tool $w={31}><Glyph $bold $italic $serif>I</Glyph></Tool>
              <Tool><Glyph $bold $size={16} $line="underline">U</Glyph></Tool>
              <Drop w={18} label="下划线类型" />
              <Tool $w={33}><Glyph $size={12} $line="line-through">abc</Glyph></Tool>
              <Tool $w={30}><Glyph $bold $size={16}>x<sub>2</sub></Glyph></Tool>
              <Tool><Glyph $bold $size={16}>x<sup>2</sup></Glyph></Tool>
              <Divider />
              <Tool aria-label="文本效果"><GlowA /></Tool>
              <Drop w={16} label="文本效果选项" />
              <Tool $w={36} aria-label="突出显示"><HighlightIcon /></Tool>
              <Drop w={16} label="突出显示颜色" />
              <Tool $w={32} aria-label="字体颜色"><FontColorIcon /></Tool>
              <Drop w={16} label="字体颜色选项" />
              <Tool $w={32} aria-label="字符底纹"><ShadedA /></Tool>
              <Tool aria-label="带圈字符"><CircledChar /></Tool>
            </ToolRow>
          </ToolRows>
          <Footer label="字体" launch />
        </Group>

        <Group $w={360}>
          <ToolRows>
            <ToolRow>
              <Tool aria-label="项目符号"><BulletsIcon /></Tool>
              <Drop w={18} label="项目符号库" />
              <MenuAnchor>
                <NumberingButton aria-label="编号"><NumbersIcon /><Chevron /></NumberingButton>
                <NumberingMenu />
              </MenuAnchor>
              <Tool $w={31} aria-label="多级列表"><MultiIcon /></Tool>
              <Drop w={12} label="多级列表库" />
              <Divider $gap={6} />
              <Tool aria-label="减少缩进量"><IndentIcon /></Tool>
              <Tool aria-label="增加缩进量"><IndentIcon right /></Tool>
              <Divider />
              <Tool $w={32} aria-label="中文版式"><SpreadIcon /></Tool>
              <Drop w={12} label="中文版式选项" />
              <Divider $gap={6} />
              <Tool $w={26} aria-label="排序"><SortIcon /></Tool>
              <Divider $gap={5} />
              <Tool $w={26} aria-label="显示编辑标记"><MarksIcon /></Tool>
            </ToolRow>
            <ToolRow>
              <Tool aria-label="左对齐"><AlignIcon /></Tool>
              <Tool $w={32} aria-label="居中"><AlignIcon center /></Tool>
            </ToolRow>
          </ToolRows>
          <Footer label="段落" launch />
        </Group>

        <Group>
          <GalleryBody>
            <Gallery>
              <StyleCards>
                {styleCards.map(s => (
                  <StyleCard key={s.name} $on={s.on}>
                    <StyleSample $size={s.size} $weight={s.weight} $italic={s.italic}>{s.sample}</StyleSample>
                    <StyleName>{s.para && <small>↲ </small>}{s.name}</StyleName>
                  </StyleCard>
                ))}
              </StyleCards>
              <GalleryScroll>
                <button aria-label="上一行"><svg width="6" height="3" viewBox="0 0 6 3" fill="currentColor"><path d="M0 3h6L3 0z" /></svg></button>
                <button aria-label="下一行"><Down w={6} /></button>
                <button aria-label="其他"><svg width="9" height="9" viewBox="0 0 9 9" fill="currentColor"><path d="M0 0h9v1.200H0zM1 4h7L4.500 8z" /></svg></button>
              </GalleryScroll>
            </Gallery>
          </GalleryBody>
          <Footer label="样式" launch />
        </Group>

        <Group $w={107}>
          <GroupBody>
            <LineList $pad={15}>
              <LineButton><LineIcon><SearchIcon size={18} color="#3d78b5" /></LineIcon>查找<Tool $w={28} as="span"><Chevron /></Tool></LineButton>
              <LineButton><LineIcon><ReplaceIcon /></LineIcon>替换</LineButton>
              <LineButton><LineIcon><PointerIcon /></LineIcon>选择<Chevron /></LineButton>
            </LineList>
          </GroupBody>
          <Footer label="编辑" />
        </Group>
        <Group $w={72}>
          <BigButton><BigIcon><TranslateIcon /></BigIcon><span>全文<br />翻译</span></BigButton>
          <GroupBody />
          <Footer label="翻译" />
        </Group>
        <Group $w={72}>
          <BigButton><BigIcon><PaperCheckIcon /></BigIcon><span>论文<br />查重</span></BigButton>
          <GroupBody />
          <Footer label="论文" />
        </Group>
        <CollapseButton aria-label="折叠功能区"><svg width="13" height="8" viewBox="0 0 13 8" fill="none" stroke="#444"><path d="m0.500 7 6-6 6 6" strokeWidth="1.200" /></svg></CollapseButton>
      </Ribbon>

      <Workspace>
        <NavPane>
          <NavHeader>
            <NavTitle>导航</NavTitle>
            <Tool $w={12} aria-label="窗格选项"><svg width="11" height="6" viewBox="0 0 11 6" fill="#666"><path d="M0 0h11L5.500 6z" /></svg></Tool>
            <Tool $w={14} aria-label="关闭窗格"><svg width="12" height="12" viewBox="0 0 12 12"><path d="m0.500.500 11 11M11.500.500l-11 11" stroke="#666" strokeWidth="1.800" /></svg></Tool>
          </NavHeader>
          <SearchBox>
            <input type="text" placeholder="在文档中搜索" aria-label="在文档中搜索" />
            <SearchIcon size={14} color={BLUE} width={2.400} />
            <Chevron />
          </SearchBox>
          <NavTabs>
            <NavTab $on>标题</NavTab>
            <NavTab>页面</NavTab>
            <NavTab>结果</NavTab>
          </NavTabs>
          <Outline>
            <OutlineItem>第一章</OutlineItem>
            <OutlineItem $on>参考文献</OutlineItem>
          </Outline>
        </NavPane>

        <Editor>
          <TabStop aria-label="制表符"><svg width="8" height="8" viewBox="0 0 8 8"><path d="M1.500 0v6.500H8" fill="none" stroke="#777" strokeWidth="3" /></svg></TabStop>
          <RulerTrack>
            <Ruler>
              <RulerClip>{marks.map((n, i) => <RulerCell key={i}><span>{n || ''}</span></RulerCell>)}</RulerClip>
              <IndentMark><svg width="11" height="10" viewBox="0 0 11 10"><path d="M0.500 9.500V5l5-4.500 5 4.500v4.500z" fill="#fff" stroke="#888" /></svg></IndentMark>
            </Ruler>
          </RulerTrack>
          <VRuler>
            <VMargin>{[4, 3, 2, 1].map(n => <VCell key={n} $tickLast><span>{n}</span></VCell>)}</VMargin>
            <VBody>{Array.from({ length: 20 }, (_, i) => <VCell key={i}><span>{i + 1}</span></VCell>)}</VBody>
          </VRuler>
          <Canvas><Page><MarginCorner /></Page></Canvas>
        </Editor>
      </Workspace>

      <StatusBar>
        <StatusItems>
          <span>第 2 页，共 2 页</span>
          <span>28 个字</span>
          <svg width="18" height="15" viewBox="0 0 18 15" fill="none" stroke="#777"><path d="M8.500 13.500H0.500v-12h6l2 1.500 2-1.500h6v3M8.500 3v11.500M8.500 13.500h8v-3" /><path d="m11 8 2 2.500L17 5" strokeWidth="1.800" /></svg>
          <span>中文(中国)</span>
          <StatusNote>
            <svg width="19" height="19" viewBox="0 0 19 19" fill="none" stroke="#666"><path d="M5 2A8 8 0 0 0 5 15" strokeWidth="1.300" /><path d="M9 2v9M5.500 5.500h7M7 4 5.500 5.500 7 7M13 4l3.500 1.500L13 7" /><path d="m8 13 3.500 4L18 9" strokeWidth="2.400" /></svg>
            辅助功能: 一切就绪
          </StatusNote>
        </StatusItems>
        <ViewButton aria-label="阅读视图"><svg width="18" height="16" viewBox="0 0 18 16" fill="none" stroke="#666"><path d="M9 2 7.500 1H0.500v12.500h7L9 15l1.500-1.500h7V1h-7zM9 2v13M2.500 4h4M2.500 6.500h4M2.500 9h4M2.500 11.500h4M11.500 4h4M11.500 6.500h4M11.500 9h4M11.500 11.500h4" /></svg></ViewButton>
        <ViewButton $on aria-label="页面视图"><svg width="17" height="17" viewBox="0 0 17 17" fill="none" stroke="#666"><path d="M0.500.500h16v16H0.500zM2.500 4h12M2.500 7h12M2.500 10h12M2.500 13h12" /></svg></ViewButton>
        <ViewButton aria-label="Web 版式视图"><svg width="18" height="16" viewBox="0 0 18 16" fill="none" stroke="#777"><path d="M7 13.500H0.500V1h13v5M2.500 4h9M2.500 6.500h7M2.500 9h5" /><circle cx="12.500" cy="11" r="4.500" fill="#777" /><path d="m10 9 2.500 1.500-1 2.500M13.500 8l2 2.500" stroke="#fff" /></svg></ViewButton>
        <ZoomButton aria-label="缩小">−</ZoomButton>
        <ZoomSlider type="range" min={0} max={100} defaultValue={52} aria-label="缩放" />
        <ZoomButton aria-label="放大">+</ZoomButton>
        <ZoomValue>122%</ZoomValue>
        <Watermark>CSDN @木子李0306</Watermark>
      </StatusBar>

      <Annotations width="1000" height="460" viewBox="0 0 1000 460" fill="none" stroke="#ff5500" strokeWidth="6.500" strokeLinecap="round" strokeLinejoin="round">
        <path d="M648 79C670 79 686 83 703 87C724 92 739 97 746 105C751 111 750 119 750 130C750 143 747 153 742 161C737 168 731 172 715 172C696 173 684 170 668 167C648 162 635 151 624 139C614 128 610 117 611 105C613 92 626 79 648 79Z" />
        <path d="M759 376C750 367 744 359 738 349C730 337 728 328 728 317C728 303 730 292 734 282C739 270 747 263 760 263C778 262 792 264 808 268C826 273 840 279 850 287C862 297 867 307 869 322C871 338 871 352 864 364C857 374 849 380 841 388C833 397 828 405 819 407C806 409 790 408 775 404C762 401 752 397 741 392" />
      </Annotations>
    </Window>
  );
}
